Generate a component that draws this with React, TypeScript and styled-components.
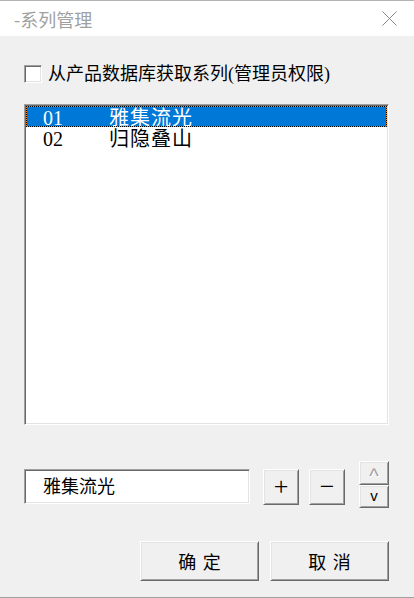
import React from "react";
import styled, { createGlobalStyle, css } from "styled-components";

const GlobalStyle = createGlobalStyle`
  html, body {
    margin: 0;
    padding: 0;
    background: #f0f0f0;
  }
  body {
    overflow: hidden;
  }
`;

// classic win32 3d edges
const sunken = css`
  box-sizing: border-box;
  border-style: solid;
  border-width: 1px;
  border-color: #a0a0a0 #ffffff #ffffff #a0a0a0;
  box-shadow: inset 1px 1px 0 #696969, inset -1px -1px 0 #e3e3e3;
  background: #ffffff;
`;

const raised = css`
  box-sizing: border-box;
  border-style: solid;
  border-width: 1px;
  border-color: #ffffff #696969 #696969 #ffffff;
  box-shadow: inset 1px 1px 0 #e3e3e3, inset -1px -1px 0 #a0a0a0;
  background: #f0f0f0;
`;

const Window = styled.div`
  width: 414px;
  height: 598px;
  box-sizing: border-box;
  border-top: 1px solid #b4b4b4;
  border-bottom: 1px solid #a0a0a0;
  background: #f0f0f0;
  display: flex;
  flex-direction: column;
  font-family: "Liberation Serif", "Noto Sans CJK SC", serif;
  color: #000;
`;

const TitleBar = styled.div`
  height: 35px;
  background: #ffffff;
  display: flex;
  align-items: center;
  justify-content: space-between;
  padding: 0 17px 0 14px;
`;

const Title = styled.span`
  font-family: "Noto Sans CJK SC", sans-serif;
  font-size: 18px;
  color: #a0a0a0;
  line-height: 1;
`;

const Close = styled.svg`
  width: 15px;
  height: 15px;
  display: block;
`;

const Body = styled.div`
  padding: 29px 25px 0 24px;
  display: flex;
  flex-direction: column;
`;

const CheckRow = styled.label`
  display: flex;
  align-items: center;
  gap: 6px;
  height: 18px;
`;

const CheckBox = styled.span`
  ${sunken};
  width: 18px;
  height: 18px;
  flex: none;
`;

const CheckText = styled.span`
  font-size: 18px;
  line-height: 18px;
`;

const ListBox = styled.div`
  ${sunken};
  margin-top: 21px;
  width: 365px;
  height: 321px;
  padding: 1px;
`;

const Row = styled.div<{ $selected?: boolean }>`
  box-sizing: border-box;
  height: 21px;
  display: flex;
  align-items: flex-start;
  padding: 2px 0 0 16px;
  font-size: 20px;
  line-height: 19px;
  border: 1px solid transparent;
  ${(p) =>
    p.$selected &&
    css`
      background: #0078d7;
      color: #ffffff;
      border-color: #ff8728;
      outline: 1px dotted #000;
      outline-offset: -1px;
    `}
`;

const Num = styled.span`
  width: 66px;
  flex: none;
`;

const Name = styled.span`
  letter-spacing: 1px;
`;

const BottomRow = styled.div`
  margin-top: 36px;
  display: flex;
  align-items: flex-start;
`;

const Edit = styled.div`
  ${sunken};
  margin-top: 8px;
  width: 227px;
  height: 35px;
  padding: 0 0 3px 18px;
  display: flex;
  align-items: center;
  font-size: 18px;
`;

const SquareButton = styled.button<{ $gap: number }>`
  ${raised};
  margin: 8px 0 0 ${(p) => p.$gap}px;
  width: 36px;
  height: 36px;
  padding: 0;
  display: flex;
  align-items: center;
  justify-content: center;
  font-family: "Liberation Serif", serif;
  font-size: 26px;
  line-height: 1;
  color: #000;
`;

const UpDown = styled.div`
  margin-left: 14px;
  display: flex;
  flex-direction: column;
`;

const ArrowButton = styled.button<{ $disabled?: boolean; $h: number; $size: number; $pad: string }>`
  ${raised};
  width: 30px;
  height: ${(p) => p.$h}px;
  padding: ${(p) => p.$pad};
  display: flex;
  align-items: center;
  justify-content: center;
  font-family: "Liberation Sans", sans-serif;
  font-size: ${(p) => p.$size}px;
  line-height: 1;
  color: ${(p) => (p.$disabled ? "#a0a0a0" : "#000")};
  text-shadow: ${(p) => (p.$disabled ? "1px 1px 0 #fff" : "none")};
`;

const ButtonRow = styled.div`
  margin-top: 33px;
  display: flex;
  justify-content: flex-end;
  gap: 11px;
`;

const DlgButton = styled.button`
  ${raised};
  width: 119px;
  height: 40px;
  padding: 0;
  font-family: "Liberation Serif", "Noto Sans CJK SC", serif;
  font-size: 18px;
  word-spacing: 2px;
  color: #000;
`;

const items = [
  { id: "01", name: "雅集流光" },
  { id: "02", name: "归隐叠山" },
];

const App = () => {
  return (
    <>
      <GlobalStyle />
      <Window>
        <TitleBar>
          <Title>-系列管理</Title>
          <Close viewBox="0 0 15 15">
            <path d="M0.5 0.5 L14.5 14.5 M14.5 0.5 L0.5 14.5" stroke="#8a8a8a" strokeWidth="1" fill="none" />
          </Close>
        </TitleBar>
        <Body>
          <CheckRow>
            <CheckBox />
            <CheckText>从产品数据库获取系列(管理员权限)</CheckText>
          </CheckRow>
          <ListBox>
            {items.map((it, i) => (
              <Row key={it.id} $selected={i === 0}>
                <Num>{it.id}</Num>
                <Name>{it.name}</Name>
              </Row>
            ))}
          </ListBox>
          <BottomRow>
            <Edit>雅集流光</Edit>
            <SquareButton $gap={13}>+</SquareButton>
            <SquareButton $gap={10}>−</SquareButton>
            <UpDown>
              <ArrowButton $disabled $h={24} $size={20} $pad="5px 0 0 0">^</ArrowButton>
              <ArrowButton $h={23} $size={15} $pad="0 0 2px 0">v</ArrowButton>
            </UpDown>
          </BottomRow>
          <ButtonRow>
            <DlgButton>确 定</DlgButton>
            <DlgButton>取 消</DlgButton>
          </ButtonRow>
        </Body>
      </Window>
    </>
  );
};

export default App;
